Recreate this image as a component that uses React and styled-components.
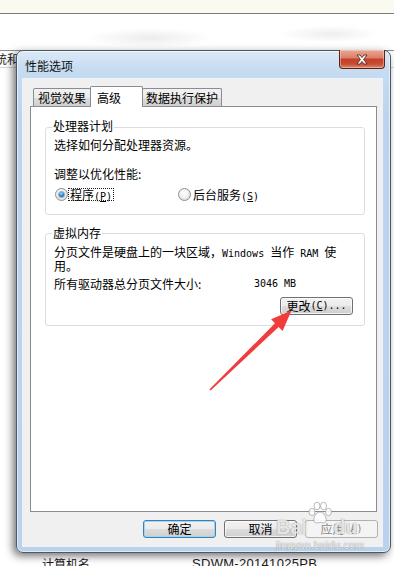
import React from 'react';
import styled, { createGlobalStyle, css } from 'styled-components';

const GlobalStyle = createGlobalStyle`
  html, body {
    margin: 0;
    padding: 0;
  }
  body {
    width: 394px;
    height: 566px;
    overflow: hidden;
    font-family: "Noto Sans CJK SC", "Liberation Sans", sans-serif;
    font-size: 12px;
    color: #000;
    background: #fff;
  }
`;

const Desktop = styled.div`
  position: relative;
  width: 394px;
  height: 566px;
  overflow: hidden;
  display: flex;
  flex-direction: column;
`;

const TopBand = styled.div`
  height: 13px;
  background: #fbfaf1;
  border-bottom: 1px solid #7c7c7c;
`;

const Haze = styled.div`
  height: 36px;
  background:
    radial-gradient(ellipse 90px 14px at 150px 24px, #ececec, rgba(255, 255, 255, 0) 70%),
    radial-gradient(ellipse 70px 12px at 330px 20px, #eeeeee, rgba(255, 255, 255, 0) 70%),
    #ffffff;
`;

const BehindBar = styled.div`
  height: 18px;
  border-top: 1px solid #8d8d8d;
  border-bottom: 1px solid #d6d6d6;
  padding-top: 1px;
  box-sizing: border-box;
  line-height: 13px;
  font-size: 12px;
  color: #222;
  text-indent: -5px;
  white-space: nowrap;
`;

const Footer = styled.div`
  margin-top: auto;
  height: 9px;
  display: flex;
  padding-left: 42px;
  line-height: 14px;
  font-size: 12px;
  color: #1a1a1a;
  white-space: nowrap;
`;

const FooterLabel = styled.span`
  width: 150px;
`;

const FooterValue = styled.span`
  font-family: "Liberation Sans", sans-serif;
  font-size: 13px;
  letter-spacing: 0.3px;
`;

const Dialog = styled.div`
  position: absolute;
  left: 16px;
  top: 50px;
  width: 375px;
  height: 503px;
  box-sizing: border-box;
  border: 1px solid #4b5866;
  border-radius: 7px;
  background: linear-gradient(180deg, #dbe9f7 0px, #c6dcf1 18px, #bcd5ee 60px, #bad3ec 100%);
  box-shadow: -3px 3px 9px rgba(0, 0, 0, 0.55), inset 0 0 0 1px rgba(255, 255, 255, 0.55);
  display: flex;
  flex-direction: column;
  z-index: 1;
`;

const TitleBar = styled.div`
  height: 27px;
  display: flex;
  align-items: flex-start;
`;

const Title = styled.div`
  margin: 8px 0 0 8px;
  line-height: 13px;
  font-size: 12px;
  color: #101010;
`;

const CloseButton = styled.div`
  margin: -1px 5px 0 auto;
  width: 46px;
  height: 19px;
  box-sizing: border-box;
  border: 1px solid #5b2216;
  border-top: none;
  border-radius: 0 0 4px 4px;
  background: linear-gradient(180deg, #eaa897 0%, #dc806a 42%, #c3412a 52%, #c64d35 78%, #de8a6f 100%);
  box-shadow: inset 0 0 0 1px rgba(255, 220, 210, 0.45);
  display: flex;
  align-items: center;
  justify-content: center;
`;

const Client = styled.div`
  flex: 1;
  margin: 0 7px 5px 5px;
  border: 1px solid #eef3f9;
  background: #f0f0f0;
  padding: 7px 5px 8px 7px;
  display: flex;
  flex-direction: column;
`;

const TabRow = styled.div`
  height: 20px;
  display: flex;
  align-items: flex-end;
  padding-left: 3px;
  position: relative;
  z-index: 1;
`;

const Tab = styled.div`
  box-sizing: border-box;
  width: ${p => p.$w}px;
  height: 18px;
  margin-left: -1px;
  border: 1px solid #898c95;
  border-bottom: none;
  border-radius: 2px 2px 0 0;
  background: linear-gradient(180deg, #f2f2f2 0%, #ebebeb 50%, #dddddd 51%, #cfcfcf 100%);
  padding-top: 2px;
  line-height: 14px;
  text-align: center;
  white-space: nowrap;
  &:first-child {
    margin-left: 0;
  }
  ${p => p.$active && css`
    height: 21px;
    margin-bottom: -1px;
    padding: 4px 0 0 6px;
    text-align: left;
    background: #ffffff;
    position: relative;
    z-index: 2;
  `}
`;

const Panel = styled.div`
  flex: 1;
  background: #ffffff;
  border: 1px solid #898c95;
  padding: 20px 11px 0 14px;
  display: flex;
  flex-direction: column;
`;

const Group = styled.div`
  border: 1px solid #d5dfe5;
  border-radius: 3px;
  padding: 0 10px ${p => p.$bottom}px 8px;
  margin-top: ${p => p.$top}px;
  display: flex;
  flex-direction: column;
`;

const GroupTitle = styled.div`
  align-self: flex-start;
  margin: ${p => p.$top}px 0 0 -2px;
  padding: 0 1px;
  background: #ffffff;
  line-height: 12px;
`;

const Line = styled.div`
  margin-top: ${p => p.$top || 0}px;
  line-height: 12px;
  white-space: pre;
`;

const Mono = styled.span`
  font-family: "DejaVu Sans Mono", "Liberation Mono", monospace;
  font-size: 10px;
`;

const Key = styled.span`
  text-decoration: underline;
  text-underline-offset: 1px;
`;

const RadioRow = styled.div`
  margin-top: 8px;
  height: 13px;
  display: flex;
  align-items: center;
`;

const Choice = styled.div`
  display: flex;
  align-items: center;
  width: ${p => p.$w ? `${p.$w}px` : 'auto'};
  margin-left: ${p => p.$left || 0}px;
`;

const RadioCircle = styled.span`
  position: relative;
  width: 13px;
  height: 13px;
  box-sizing: border-box;
  border-radius: 50%;
  border: 1px solid #8c8e90;
  background: radial-gradient(circle at 45% 40%, #ffffff 0%, #f1f1f1 45%, #cdcdcd 100%);
  ${p => p.$checked && css`
    &::after {
      content: '';
      position: absolute;
      left: 3px;
      top: 3px;
      width: 5px;
      height: 5px;
      border-radius: 50%;
      background: radial-gradient(circle at 45% 35%, #a8e6ff 0%, #2f8fd8 45%, #0c3d73 100%);
      box-shadow: 0 0 0 1px rgba(40, 90, 140, 0.45);
    }
  `}
`;

const ChoiceLabel = styled.span`
  height: 13px;
  box-sizing: border-box;
  border: 1px dotted ${p => p.$focus ? '#222' : 'transparent'};
  padding: 0 1px;
  line-height: 11px;
  white-space: nowrap;
`;

const ValueRow = styled.div`
  margin-top: 6px;
  display: flex;
  line-height: 12px;
`;

const ValueLabel = styled.span`
  width: 200px;
`;

const Button = styled.div`
  box-sizing: border-box;
  width: 73px;
  height: 18px;
  border: 1px solid #707070;
  border-radius: 3px;
  background: linear-gradient(180deg, #f2f2f2 0%, #ebebeb 50%, #dddddd 51%, #cfcfcf 100%);
  box-shadow: inset 0 0 0 1px rgba(255, 255, 255, 0.7);
  display: flex;
  align-items: center;
  justify-content: center;
  line-height: 14px;
  white-space: nowrap;
  ${p => p.$default && css`
    border-color: #3c7fb1;
    box-shadow: inset 0 0 0 1px #9fd6f5;
  `}
  ${p => p.$disabled && css`
    border-color: #adb2b5;
    background: #f4f4f4;
    color: #8a8a8a;
    box-shadow: none;
  `}
`;

const ChangeButton = styled(Button)`
  margin: 7px 1px 0 0;
  align-self: flex-end;
`;

const ButtonRow = styled.div`
  margin: 8px -1px 0 0;
  display: flex;
  justify-content: flex-end;
  gap: 8px;
`;

const Arrow = styled.svg`
  position: absolute;
  left: 205px;
  top: 305px;
  z-index: 3;
`;

const Watermark = styled.div`
  position: absolute;
  left: 276px;
  top: 505px;
  z-index: 4;
  pointer-events: none;
  display: flex;
  flex-direction: column;
  color: rgba(255, 255, 255, 0.8);
  text-shadow: 0 0 1px rgba(110, 110, 110, 0.55), 0 0 1px rgba(110, 110, 110, 0.55);
  font-family: "Liberation Sans", sans-serif;
`;

const Brand = styled.div`
  display: flex;
  align-items: flex-end;
  height: 32px;
  font-size: 20px;
  font-weight: bold;
  line-height: 20px;
`;

const Site = styled.div`
  font-size: 10.5px;
  line-height: 11px;
  margin-top: 3px;
  letter-spacing: 0.2px;
`;

const CloseGlyph = () => (
  <svg width="14" height="11" viewBox="0 0 14 11">
    <path d="M2 1 L5 1 L7 3.6 L9 1 L12 1 L8.6 5.5 L12 10 L9 10 L7 7.4 L5 10 L2 10 L5.4 5.5 Z"
      fill="#ffffff" stroke="#5a2a22" strokeWidth="0.9" strokeLinejoin="round" />
  </svg>
);

const Paw = () => (
  <svg width="26" height="24" viewBox="0 0 26 24" style={{ marginBottom: 12 }}>
    <g fill="rgba(255,255,255,0.85)" stroke="rgba(140,140,140,0.6)" strokeWidth="1">
      <ellipse cx="5" cy="11" rx="3" ry="3.6" />
      <ellipse cx="10" cy="5" rx="3" ry="3.8" />
      <ellipse cx="16.5" cy="5" rx="3" ry="3.8" />
      <ellipse cx="21.5" cy="11" rx="3" ry="3.6" />
      <path d="M13 11 C9 11 6 17 7 20 C8 23 11 21.5 13 21.5 C15 21.5 18 23 19 20 C20 17 17 11 13 11 Z" />
    </g>
  </svg>
);

export default function App() {
  return (
    <>
      <GlobalStyle />
      <Desktop>
        <TopBand />
        <Haze />
        <BehindBar>统和</BehindBar>
        <Footer>
          <FooterLabel>计算机名</FooterLabel>
          <FooterValue>SDWM-20141025PB</FooterValue>
        </Footer>

        <Dialog>
          <TitleBar>
            <Title>性能选项</Title>
            <CloseButton><CloseGlyph /></CloseButton>
          </TitleBar>
          <Client>
            <TabRow>
              <Tab $w={58}>视觉效果</Tab>
              <Tab $w={53} $active>高级</Tab>
              <Tab $w={80}>数据执行保护</Tab>
            </TabRow>
            <Panel>
              <Group $top={0} $bottom={13}>
                <GroupTitle $top={-8}>处理器计划</GroupTitle>
                <Line $top={7}>选择如何分配处理器资源。</Line>
                <Line $top={17}>调整以优化性能:</Line>
                <RadioRow>
                  <Choice $w={123} $left={1}>
                    <RadioCircle $checked />
                    <ChoiceLabel $focus>程序<Mono>(<Key>P</Key>)</Mono></ChoiceLabel>
                  </Choice>
                  <Choice>
                    <RadioCircle />
                    <ChoiceLabel>后台服务<Mono>(<Key>S</Key>)</Mono></ChoiceLabel>
                  </Choice>
                </RadioRow>
              </Group>
              <Group $top={18} $bottom={10}>
                <GroupTitle $top={-7}>虚拟内存</GroupTitle>
                <Line $top={7}>分页文件是硬盘上的一块区域，<Mono>Windows </Mono>当作<Mono> RAM </Mono>使</Line>
                <Line>用。</Line>
                <ValueRow>
                  <ValueLabel>所有驱动器总分页文件大小:</ValueLabel>
                  <Mono>3046 MB</Mono>
                </ValueRow>
                <ChangeButton>更改<Mono>(<Key>C</Key>)...</Mono></ChangeButton>
              </Group>
            </Panel>
            <ButtonRow>
              <Button $default>确定</Button>
              <Button>取消</Button>
              <Button $disabled>应用<Mono>(<Key>A</Key>)</Mono></Button>
            </ButtonRow>
          </Client>
        </Dialog>

        <Arrow width="92" height="90" viewBox="0 0 92 90">
          <polygon
            points="4.4,84.4 70,18.2 66.1,14.3 86.5,5.5 77.6,26 73.6,22 5.6,85.6"
            fill="#f23c3c"
          />
        </Arrow>

        <Watermark>
          <Brand>
            <span>Bai</span>
            <Paw />
            <span>du</span>
          </Brand>
          <Site>jingyan.baidu.com</Site>
        </Watermark>
      </Desktop>
    </>
  );
}
